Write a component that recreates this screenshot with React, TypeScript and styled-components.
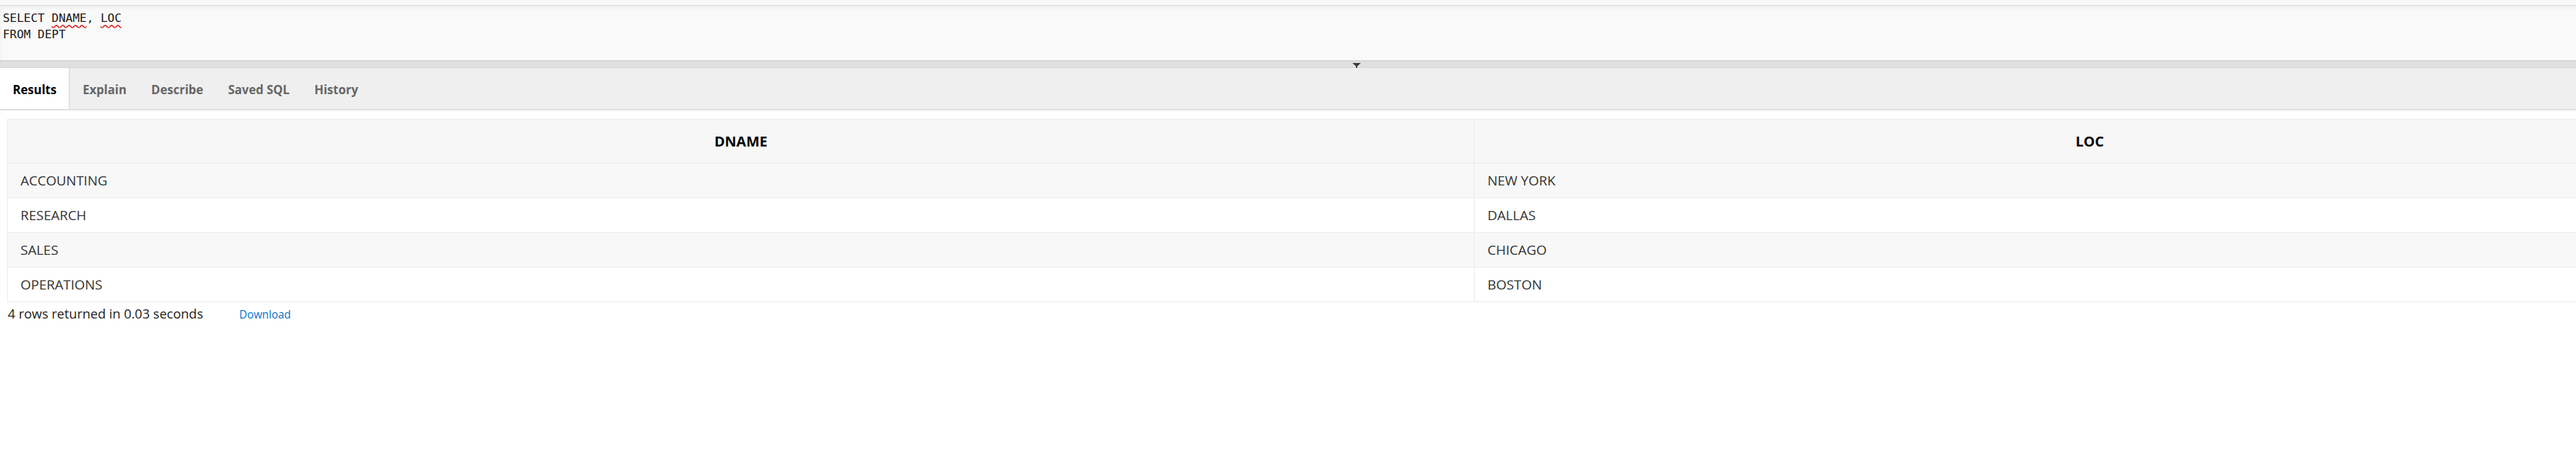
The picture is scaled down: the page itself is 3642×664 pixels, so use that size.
import styled, {createGlobalStyle} from 'styled-components';

const GlobalStyle = createGlobalStyle`
  html, body {
    margin: 0;
    padding: 0;
    background: #ffffff;
    overflow: hidden;
  }
  body {
    font-family: 'Open Sans', 'Noto Sans', Arial, sans-serif;
  }
`;

const rows = [
  {dname: 'ACCOUNTING', loc: 'NEW YORK'},
  {dname: 'RESEARCH', loc: 'DALLAS'},
  {dname: 'SALES', loc: 'CHICAGO'},
  {dname: 'OPERATIONS', loc: 'BOSTON'},
];

const tabs = ['Results', 'Explain', 'Describe', 'Saved SQL', 'History'];

function App() {
  return (
    <>
      <GlobalStyle />
      <Page>
        <TopStrip />
        <Editor>
          <CodeLine>
            SELECT <Misspelt>DNAME</Misspelt>, <Misspelt>LOC</Misspelt>
          </CodeLine>
          <CodeLine>FROM DEPT</CodeLine>
        </Editor>
        <Splitter>
          <svg width='12' height='7' viewBox='0 0 12 7'>
            <path d='M0 0 H12 L7 4.5 V7 H5 V4.5 Z' fill='#3a3a3a' />
          </svg>
        </Splitter>
        <TabBar>
          {tabs.map((label, i) => (
            <Tab key={label} $active={i === 0}>
              {label}
            </Tab>
          ))}
        </TabBar>
        <Results>
          <Table>
            <colgroup>
              <col style={{width: 2074}} />
              <col style={{width: 1740}} />
            </colgroup>
            <thead>
              <tr>
                <HeadCell>DNAME</HeadCell>
                <HeadCell>LOC</HeadCell>
              </tr>
            </thead>
            <tbody>
              {rows.map((r, i) => (
                <Row key={r.dname} $odd={i % 2 === 0}>
                  <Cell>{r.dname}</Cell>
                  <Cell>{r.loc}</Cell>
                </Row>
              ))}
            </tbody>
          </Table>
          <Footer>
            <span>4 rows returned in 0.03 seconds</span>
            <DownloadLink href='#'>Download</DownloadLink>
          </Footer>
        </Results>
      </Page>
    </>
  );
}

export default App;

const Page = styled.div`
  width: 3836px;
  display: flex;
  flex-direction: column;
`;

const TopStrip = styled.div`
  height: 7px;
  background: #f8f8f8;
`;

const Editor = styled.div`
  height: 71px;
  padding: 6px 0 0 4px;
  background: #f9f9f9;
  border-top: 1px solid #dadada;
  box-shadow: inset 0 3px 4px rgba(0, 0, 0, 0.05);
  font-family: 'DejaVu Sans Mono', 'Liberation Mono', monospace;
  font-size: 16.4px;
  line-height: 23px;
  color: #1a1a1a;
`;

const CodeLine = styled.div`
  white-space: pre;
`;

const Misspelt = styled.span`
  text-decoration-line: underline;
  text-decoration-style: wavy;
  text-decoration-color: #e02020;
  text-underline-offset: 3px;
`;

const Splitter = styled.div`
  height: 8px;
  background: #e0e0e0;
  border-top: 2px solid #d6d6d6;
  border-bottom: 1px solid #d6d6d6;
  display: flex;
  justify-content: center;
  align-items: flex-end;
  svg {
    display: block;
    margin-bottom: -1px;
  }
`;

const TabBar = styled.div`
  height: 58px;
  display: flex;
  background: #efefef;
  border-bottom: 2px solid #e0e0e0;
`;

const Tab = styled.div<{$active?: boolean}>`
  display: flex;
  align-items: center;
  padding: 3px 17px 0 18px;
  font-size: 17px;
  font-weight: 700;
  color: ${(p) => (p.$active ? '#000000' : '#666666')};
  background: ${(p) => (p.$active ? '#ffffff' : 'transparent')};
  border-right: 2px solid ${(p) => (p.$active ? '#e0e0e0' : 'transparent')};
  margin-right: ${(p) => (p.$active ? '0' : '-2px')};
`;

const Results = styled.div`
  padding: 12px 0 0 10px;
`;

const Table = styled.table`
  width: 3814px;
  table-layout: fixed;
  border-collapse: collapse;
  border: 1px solid #ececec;
`;

const HeadCell = styled.th`
  height: 61px;
  padding: 0;
  background: #f7f7f7;
  border: 1px solid #ececec;
  font-size: 20px;
  font-weight: 700;
  color: #000000;
  text-align: center;
`;

const Row = styled.tr<{$odd?: boolean}>`
  background: ${(p) => (p.$odd ? '#f8f8f8' : '#ffffff')};
`;

const Cell = styled.td`
  height: 48px;
  padding: 0 18px;
  border: 1px solid #ececec;
  font-size: 19px;
  color: #333333;
`;

const Footer = styled.div`
  display: flex;
  align-items: baseline;
  gap: 51px;
  padding: 4px 0 0 1px;
  font-size: 18.5px;
  line-height: 24px;
  color: #222222;
`;

const DownloadLink = styled.a`
  font-size: 15.4px;
  color: #0572ce;
  text-decoration: none;
`;
